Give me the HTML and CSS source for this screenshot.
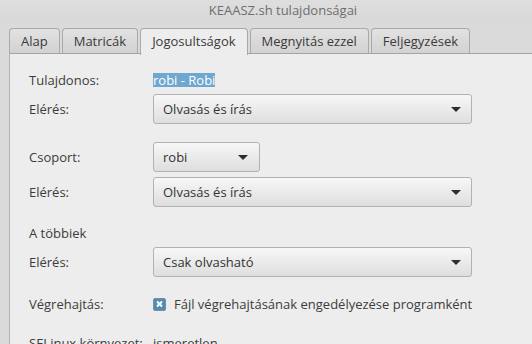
FILE: index.html
```html
<!DOCTYPE html>
<html lang="hu">
<head>
    <title>KEAASZ.sh tulajdonságai</title>
    <meta charset="utf-8">
    <link rel="stylesheet" href="styles.css">
</head>
<body>

    <!-- Ablak fejléc -->
    <div class="titlebar">KEAASZ.sh tulajdonságai</div>

    <!-- Fülek -->
    <div class="tabs">
        <div class="tab">Alap</div>
        <div class="tab">Matricák</div>
        <div class="tab active">Jogosultságok</div>
        <div class="tab">Megnyitás ezzel</div>
        <div class="tab">Feljegyzések</div>
    </div>

    <!-- Jogosultságok lap -->
    <div class="panel">
        <div class="row owner">
            <span class="label">Tulajdonos:</span>
            <span class="selected">robi - Robi</span>
        </div>
        <div class="row combo-row">
            <span class="label">Elérés:</span>
            <div class="combo wide"><span>Olvasás és írás</span><i class="arrow"></i></div>
        </div>

        <div class="row combo-row group">
            <span class="label">Csoport:</span>
            <div class="combo small"><span>robi</span><i class="arrow"></i></div>
        </div>
        <div class="row combo-row access2">
            <span class="label">Elérés:</span>
            <div class="combo wide"><span>Olvasás és írás</span><i class="arrow"></i></div>
        </div>

        <div class="row others">
            <span class="label">A többiek</span>
        </div>
        <div class="row combo-row access3">
            <span class="label">Elérés:</span>
            <div class="combo wide"><span>Csak olvasható</span><i class="arrow"></i></div>
        </div>

        <div class="row exec">
            <span class="label">Végrehajtás:</span>
            <label class="check"><span class="box"></span>Fájl végrehajtásának engedélyezése programként</label>
        </div>
        <div class="row selinux">
            <span class="label">SELinux környezet:</span>
            <span>ismeretlen</span>
        </div>
    </div>

</body>
</html>
```

FILE: styles.css
```css
/* ablak alap */
body{
    margin: 0;
    width: 532px;
    height: 344px;
    overflow: hidden;
    background-color: #dadada;
    font-family: "Open Sans", "DejaVu Sans", sans-serif;
    font-size: 13px;
    color: #3c3c3c;
}

.titlebar{ /* fejléc sáv */
    height: 22px;
    line-height: 20px;
    padding-left: 34px;
    text-align: center;
    color: #6e6e6e;
    background: linear-gradient(#dedede, #d8d8d8);
}

.tabs{ /* fülek sora */
    display: flex;
    gap: 2px;
    padding: 6px 0 0 9px;
    height: 25px;
    align-items: flex-end;
}

.tab{
    height: 24px;
    line-height: 24px;
    padding: 0 11px;
    border: 1px solid #a9a9a9;
    border-bottom: none;
    border-radius: 4px 4px 0 0;
    background: linear-gradient(#e2e2e2, #d2d2d2);
    color: #3a3a3a;
}

.tab.active{ /* aktív fül, rálóg a panelre */
    height: 26px;
    margin-bottom: -2px;
    line-height: 25px;
    background: #ededed;
    position: relative;
    z-index: 1;
}

.panel{ /* tartalom */
    height: 290px;
    border-top: 1px solid #a4a4a4;
    border-left: 1px solid #b4b4b4;
    margin-left: 9px;
    background-color: #ededed;
    padding: 13px 0 0 19px;
}

.row{
    display: flex;
    align-items: center;
    height: 20px;
}

.label{
    width: 124px;
    flex: none;
}

.owner{
    height: 26px;
}

.selected{ /* kijelölt név */
    background-color: #6ea7cf;
    color: #ffffff;
    line-height: 14px;
}

.combo-row{
    height: 30px;
    margin-top: 1px;
}

.group{ margin-top: 18px; }
.access2{ margin-top: 5px; }
.others{ margin-top: 16px; }
.access3{ margin-top: 4px; }
.exec{ margin-top: 17px; }
.selinux{ margin-top: 19px; }

.combo{ /* legördülő gomb */
    box-sizing: border-box;
    height: 30px;
    display: flex;
    align-items: center;
    justify-content: space-between;
    padding: 0 10px 0 9px;
    border: 1px solid #b2b2b2;
    border-radius: 3px;
    background: linear-gradient(#f7f7f7, #dedede);
    color: #333333;
}

.combo.wide{ width: 319px; }
.combo.small{ width: 107px; padding-right: 11px; }

.arrow{ /* lefelé nyíl */
    width: 0;
    height: 0;
    border-left: 5px solid transparent;
    border-right: 5px solid transparent;
    border-top: 5px solid #2e2e2e;
}

.check{
    display: flex;
    align-items: center;
    gap: 8px;
}

.box{ /* bepipált jelölőnégyzet */
    box-sizing: border-box;
    width: 13px;
    height: 13px;
    border: 1px solid #7c8d99;
    border-radius: 2px;
    background: #4f8cb8;
    position: relative;
}

.box::before, .box::after{
    content: "";
    position: absolute;
    left: 2px;
    top: 4.5px;
    width: 7px;
    height: 2px;
    background: #ffffff;
    transform: rotate(45deg);
}

.box::after{
    transform: rotate(-45deg);
}
```
